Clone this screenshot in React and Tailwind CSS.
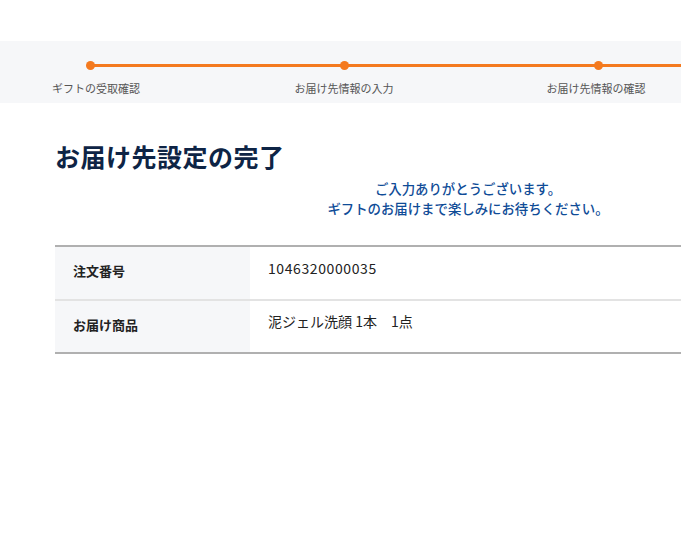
import React from "react";

const steps = ["ギフトの受取確認", "お届け先情報の入力", "お届け先情報の確認"];

export default function App() {
  return (
    <div
      className="w-[681px] h-[540px] overflow-hidden bg-white"
      style={{ fontFamily: '"Noto Sans CJK JP", "Noto Sans", sans-serif' }}
    >
      <div className="h-[41px]" />
      <div className="h-[62px] bg-[#f6f7f9] overflow-hidden">
        <div className="flex ml-[-37px] pt-[20px]">
          {steps.map((s, i) => (
            <div key={i} className="w-[254px] shrink-0 flex flex-col items-center">
              <div className="relative w-full h-[9px]">
                <div className="absolute left-[127px] w-[254px] top-[3px] h-[3px] bg-[#f47a1f]" />
                <div className="absolute left-[123px] top-0 w-[9px] h-[9px] rounded-full bg-[#f47a1f]" />
              </div>
              <div
                className={
                  "mt-[10px] text-[11px] leading-[16px] text-[#555] " +
                  (i === 0 ? "ml-[12px]" : i === 2 ? "mr-[4px]" : "")
                }
              >
                {s}
              </div>
            </div>
          ))}
        </div>
      </div>

      <div className="ml-[55px] w-[826px]">
        <h1 className="mt-[35px] text-[25px] leading-[37px] font-bold text-[#0e2445] tracking-[0.5px]">
          お届け先設定の完了
        </h1>
        <div className="mt-[3px] text-center text-[13.4px] leading-[20px] font-medium text-[#0f4c97]">
          <p>ご入力ありがとうございます。</p>
          <p>ギフトのお届けまで楽しみにお待ちください。</p>
        </div>

        <div className="mt-[27px] border-t-2 border-b-2 border-[#b0b0b0]">
          <div className="flex h-[54px] border-b-2 border-[#e3e3e3]">
            <div className="w-[195px] shrink-0 bg-[#f6f7f9] pl-[18px] pt-[14px] text-[13px] leading-[20px] font-bold text-[#222]">
              注文番号
            </div>
            <div className="pl-[18px] pt-[11px] text-[14px] leading-[20px] text-[#222] tracking-[0.6px]">
              1046320000035
            </div>
          </div>
          <div className="flex h-[51px]">
            <div className="w-[195px] shrink-0 bg-[#f6f7f9] pl-[18px] pt-[14px] text-[13px] leading-[20px] font-bold text-[#222]">
              お届け商品
            </div>
            <div className="pl-[18px] pt-[10px] text-[14px] leading-[20px] text-[#222] whitespace-pre">
              泥ジェル洗顔 1本　1点
            </div>
          </div>
        </div>
      </div>
    </div>
  );
}
